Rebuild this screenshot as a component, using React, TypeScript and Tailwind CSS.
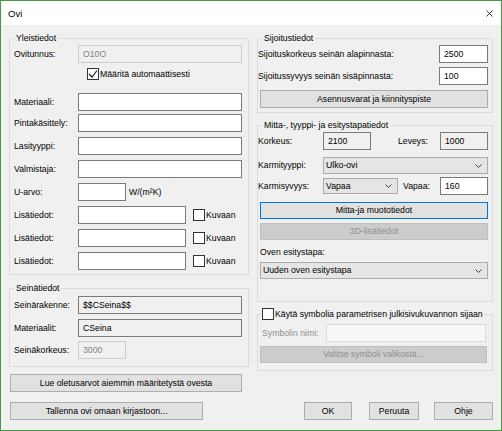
import React from "react";

type Kind = "normal" | "readonly" | "disabled";

const fieldTone: Record<Kind, string> = {
  normal: "border-[#7a7a7a] bg-white text-black",
  readonly: "border-[#7a7a7a] bg-[#f0f0f0] text-black",
  disabled: "border-[#cccccc] bg-[#f0f0f0] text-[#838383]",
};

function Field({
  value = "",
  kind = "normal",
  className = "",
}: {
  value?: string;
  kind?: Kind;
  className?: string;
}) {
  return (
    <div
      className={`flex h-[18px] shrink-0 items-center border pl-[4px] ${fieldTone[kind]} ${className}`}
    >
      {value}
    </div>
  );
}

function Chevron() {
  return (
    <svg width="7" height="4" viewBox="0 0 7 4" className="mr-[5px] shrink-0">
      <polyline points="0.5,0.5 3.5,3.5 6.5,0.5" fill="none" stroke="#404040" strokeWidth="1" />
    </svg>
  );
}

function Select({ value, className = "" }: { value: string; className?: string }) {
  return (
    <div
      className={`flex shrink-0 items-center justify-between border border-[#acacac] bg-[#e5e5e5] pl-[2px] ${className}`}
    >
      <span>{value}</span>
      <Chevron />
    </div>
  );
}

function Check({ checked = false }: { checked?: boolean }) {
  return (
    <div className="flex h-[12px] w-[12px] shrink-0 items-center justify-center border border-[#333333] bg-white">
      {checked && (
        <svg width="10" height="10" viewBox="0 0 10 10">
          <polyline points="1,5 4,8 9,1.5" fill="none" stroke="#222" strokeWidth="1.2" />
        </svg>
      )}
    </div>
  );
}

function Button({
  children,
  className = "",
  disabled = false,
  focused = false,
}: {
  children: React.ReactNode;
  className?: string;
  disabled?: boolean;
  focused?: boolean;
}) {
  const tone = disabled
    ? "border-[#bfbfbf] bg-[#cccccc] text-[#8f8f8f]"
    : focused
      ? "border-[#0078d7] bg-[#e1e1e1] text-black"
      : "border-[#adadad] bg-[#e1e1e1] text-black";
  return (
    <div className={`flex shrink-0 items-center justify-center border ${tone} ${className}`}>
      {children}
    </div>
  );
}

function Group({
  title,
  className = "",
  children,
}: {
  title: React.ReactNode;
  className?: string;
  children: React.ReactNode;
}) {
  return (
    <div className={`relative border border-[#dcdcdc] ${className}`}>
      <div className="absolute -top-[6px] left-[4px] flex h-[11px] items-center bg-[#f0f0f0] px-[2px]">
        {title}
      </div>
      {children}
    </div>
  );
}

function Row({ label, children, className = "" }: { label: string; children: React.ReactNode; className?: string }) {
  return (
    <div className={`flex h-[18px] items-center ${className}`}>
      <span className="w-[64px] shrink-0">{label}</span>
      {children}
    </div>
  );
}

function ExtraRow({ className = "" }: { className?: string }) {
  return (
    <Row label="Lisätiedot:" className={className}>
      <Field className="w-[108px]" />
      <div className="ml-[7px] flex items-center gap-[1px]">
        <Check />
        <span>Kuvaan</span>
      </div>
    </Row>
  );
}

export default function App() {
  return (
    <div className="flex h-[431px] w-[502px] flex-col border border-[#3f9b45] font-['Liberation_Sans',Arial,sans-serif] text-[8.7px] leading-[11px] text-black">
      {/* title bar */}
      <div className="flex h-[24px] shrink-0 items-center justify-between bg-white pl-[7px] pr-[8px]">
        <span className="text-[9.5px]">Ovi</span>
        <svg width="7" height="7" viewBox="0 0 7 7">
          <path d="M0.5 0.5 L6.5 6.5 M6.5 0.5 L0.5 6.5" stroke="#222" strokeWidth="0.9" />
        </svg>
      </div>

      <div className="flex flex-1 flex-col bg-[#f0f0f0] pl-[8px] pr-[7px] pt-[13px]">
        <div className="flex items-start gap-[8px]">
          {/* left column */}
          <div className="flex w-[240px] shrink-0 flex-col">
            <Group title="Yleistiedot" className="pb-[4px] pl-[4px] pt-[6px]">
              <Row label="Ovitunnus:">
                <Field value="O10O" kind="disabled" className="w-[164px]" />
              </Row>
              <div className="ml-[73px] mt-[5px] flex h-[12px] items-center gap-[1px]">
                <Check checked />
                <span>Määritä automaattisesti</span>
              </div>
              <Row label="Materiaali:" className="mt-[13px]">
                <Field className="w-[164px]" />
              </Row>
              <Row label="Pintakäsittely:" className="mt-[3px]">
                <Field className="w-[164px]" />
              </Row>
              <Row label="Lasityyppi:" className="mt-[5px]">
                <Field className="w-[164px]" />
              </Row>
              <Row label="Valmistaja:" className="mt-[5px]">
                <Field className="w-[164px]" />
              </Row>
              <Row label="U-arvo:" className="mt-[5px]">
                <Field className="w-[48px]" />
                <span className="ml-[3px]">W/(m²K)</span>
              </Row>
              <ExtraRow className="mt-[5px]" />
              <ExtraRow className="mt-[5px]" />
              <ExtraRow className="mt-[5px]" />
            </Group>

            <Group title="Seinätiedot" className="mt-[13px] pb-[7px] pl-[4px] pt-[7px]">
              <Row label="Seinärakenne:">
                <Field value="$$CSeina$$" kind="readonly" className="w-[164px]" />
              </Row>
              <Row label="Materiaalit:" className="mt-[5px]">
                <Field value="CSeina" kind="readonly" className="w-[164px]" />
              </Row>
              <Row label="Seinäkorkeus:" className="mt-[4px]">
                <Field value="3000" kind="disabled" className="w-[48px]" />
              </Row>
            </Group>

            <Button className="ml-[1px] mt-[7px] h-[18px] w-[232px]">
              Lue oletusarvot aiemmin määritetystä ovesta
            </Button>
          </div>

          {/* right column */}
          <div className="flex w-[236px] shrink-0 flex-col">
            <Group title="Sijoitustiedot" className="pb-[4px] pr-[4px] pt-[6px]">
              <div className="flex h-[18px] items-center justify-between">
                <span>Sijoituskorkeus seinän alapinnasta:</span>
                <Field value="2500" className="w-[49px]" />
              </div>
              <div className="mt-[4px] flex h-[18px] items-center justify-between">
                <span>Sijoitussyvyys seinän sisäpinnasta:</span>
                <Field value="100" className="w-[49px]" />
              </div>
              <Button className="ml-[2px] mt-[5px] h-[18px]">Asennusvarat ja kiinnityspiste</Button>
            </Group>

            <Group title="Mitta-, tyyppi- ja esitystapatiedot" className="mt-[12px] pb-[22px] pr-[4px] pt-[6px]">
              <div className="flex h-[18px] items-center">
                <span className="w-[65px] shrink-0">Korkeus:</span>
                <Field value="2100" kind="readonly" className="w-[48px]" />
                <span className="ml-[27px] w-[42px] shrink-0">Leveys:</span>
                <Field value="1000" kind="readonly" className="w-[48px]" />
              </div>
              <div className="mt-[7px] flex h-[17px] items-center">
                <span className="w-[65px] shrink-0">Karmityyppi:</span>
                <Select value="Ulko-ovi" className="h-[17px] flex-1" />
              </div>
              <div className="mt-[3px] flex h-[18px] items-center">
                <span className="w-[65px] shrink-0">Karmisyvyys:</span>
                <Select value="Vapaa" className="h-[16px] w-[75px]" />
                <span className="ml-[5px] w-[37px] shrink-0">Vapaa:</span>
                <Field value="160" className="h-[17px] w-[48px]" />
              </div>
              <Button focused className="ml-[2px] mt-[7px] h-[17px]">
                Mitta-ja muototiedot
              </Button>
              <Button disabled className="ml-[2px] mt-[4px] h-[17px]">
                3D-lisätiedot
              </Button>
              <div className="ml-[2px] mt-[7px] h-[11px]">Oven esitystapa:</div>
              <Select value="Uuden oven esitystapa" className="ml-[2px] mt-[4px] h-[17px]" />
            </Group>

            <div className="relative mt-[12px] border border-[#dcdcdc] pb-[7px] pl-[4px] pr-[6px] pt-[9px]">
              <div className="absolute -top-[7px] left-[3px] flex h-[12px] items-center gap-[1px] bg-[#f0f0f0] px-[1px]">
                <Check />
                <span>Käytä symbolia parametrisen julkisivukuvannon sijaan</span>
              </div>
              <div className="flex h-[18px] items-center">
                <span className="w-[64px] shrink-0 text-[#8f8f8f]">Symbolin nimi:</span>
                <div className="h-[18px] flex-1 border border-[#d9d9d9] bg-[#f7f7f7]" />
              </div>
              <Button disabled className="-ml-[2px] mt-[4px] h-[17px] w-[227px]">
                Valitse symboli valikosta...
              </Button>
            </div>
          </div>
        </div>

        {/* bottom row */}
        <div className="mt-[10px] flex h-[18px] items-center justify-between">
          <Button className="ml-[1px] h-[18px] w-[193px]">Tallenna ovi omaan kirjastoon...</Button>
          <div className="mr-[1px] flex items-center">
            <Button className="h-[18px] w-[48px]">OK</Button>
            <Button className="ml-[17px] h-[18px] w-[50px]">Peruuta</Button>
            <Button className="ml-[15px] h-[18px] w-[59px]">Ohje</Button>
          </div>
        </div>
      </div>
    </div>
  );
}
